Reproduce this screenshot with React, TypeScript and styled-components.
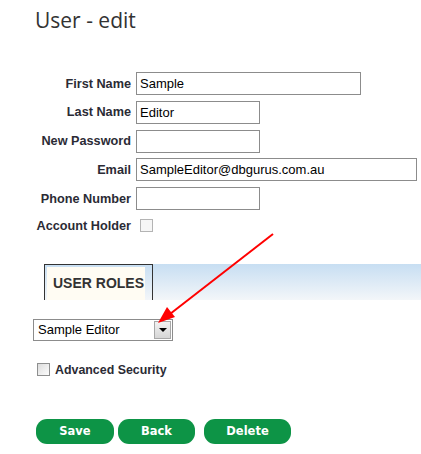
import React from "react";
import styled, { createGlobalStyle } from "styled-components";

const Global = createGlobalStyle`
  html, body { margin: 0; padding: 0; background: #fff; }
  body { font-family: "Liberation Sans", Arial, sans-serif; }
`;

const Page = styled.div`
  position: relative;
  width: 421px;
  height: 454px;
  overflow: hidden;
  padding-top: 6px;
  box-sizing: border-box;
`;

const Title = styled.h1`
  margin: 0 0 38px 35px;
  font-family: "Open Sans", "Noto Sans", sans-serif;
  font-weight: 400;
  font-size: 21px;
  line-height: 28px;
  color: #333;
`;

const FormGrid = styled.div`
  display: grid;
  grid-template-columns: 131px 1fr;
  column-gap: 5px;
  row-gap: 5.75px;
  align-items: center;
`;

const Label = styled.label`
  text-align: right;
  font-weight: 700;
  font-size: 12.7px;
  color: #2b2b35;
  white-space: nowrap;
`;

const TextInput = styled.input<{ $w: number }>`
  width: ${(p) => p.$w}px;
  height: 23px;
  box-sizing: border-box;
  border: 1px solid #8c8c8c;
  padding: 0 3px;
  margin: 0;
  font-family: "Liberation Sans", Arial, sans-serif;
  font-size: 13px;
  color: #000;
  background: #fff;
  outline: none;
`;

const CheckRow = styled.div`
  height: 20px;
  display: flex;
  align-items: center;
  padding-left: 4px;
`;

const Check = styled.span<{ $disabled?: boolean }>`
  display: inline-block;
  width: 13px;
  height: 13px;
  box-sizing: border-box;
  border: 1px solid ${(p) => (p.$disabled ? "#b4b4b4" : "#8e8f8f")};
  background: ${(p) =>
    p.$disabled
      ? "#f6f6f6"
      : "linear-gradient(135deg, #dcdcdc 0%, #f0f0f0 60%, #fcfcfc 100%)"};
`;

const TabBand = styled.div`
  margin: 28px 0 0 44px;
  height: 36px;
  background: linear-gradient(#c7def2, #f3f6f9);
  display: flex;
`;

const Tab = styled.div`
  width: 109px;
  box-sizing: border-box;
  border: 1px solid #333;
  border-bottom: none;
  padding: 2px 7px 0 2px;
  display: flex;
`;

const TabInner = styled.div`
  flex: 1;
  background: #fffcf3;
  display: flex;
  align-items: center;
  padding-left: 6px;
  font-weight: 700;
  font-size: 14px;
  color: #333;
  white-space: nowrap;
`;

const SelectBox = styled.div`
  margin: 19px 0 0 33px;
  width: 140px;
  height: 22px;
  box-sizing: border-box;
  border: 1px solid #8c8c8c;
  display: flex;
  align-items: stretch;
  background: #fff;
`;

const SelectText = styled.span`
  flex: 1;
  display: flex;
  align-items: center;
  padding-left: 4px;
  font-size: 13px;
  color: #000;
`;

const SelectButton = styled.span`
  width: 17px;
  margin: 1px;
  box-sizing: border-box;
  border: 1px solid #a8a8a8;
  background: linear-gradient(#f2f2f2, #d6d6d6);
  display: flex;
  align-items: center;
  justify-content: center;
  &::after {
    content: "";
    border-left: 4px solid transparent;
    border-right: 4px solid transparent;
    border-top: 4px solid #000;
  }
`;

const AdvRow = styled.div`
  margin: 21px 0 0 37px;
  display: flex;
  align-items: center;
  gap: 5px;
  height: 15px;
`;

const AdvLabel = styled.span`
  font-weight: 700;
  font-size: 12.4px;
  color: #2b2b35;
  position: relative;
  top: 1px;
`;

const ButtonRow = styled.div`
  margin: 42px 0 0 36px;
  display: flex;
`;

const GreenButton = styled.button<{ $w: number; $gap: number }>`
  width: ${(p) => p.$w}px;
  height: 25px;
  margin-right: ${(p) => p.$gap}px;
  border: none;
  border-radius: 11px;
  background: #0d9446;
  color: #fff;
  font-family: "DejaVu Sans", Verdana, sans-serif;
  font-weight: 700;
  font-size: 11.5px;
  padding: 0;
  cursor: pointer;
`;

const ArrowOverlay = styled.svg`
  position: absolute;
  left: 0;
  top: 0;
  pointer-events: none;
`;

export default function App() {
  return (
    <>
      <Global />
      <Page>
        <Title>User - edit</Title>
        <FormGrid>
          <Label>First Name</Label>
          <TextInput $w={225} defaultValue="Sample" />
          <Label>Last Name</Label>
          <TextInput $w={124} defaultValue="Editor" />
          <Label>New Password</Label>
          <TextInput $w={124} type="password" />
          <Label>Email</Label>
          <TextInput $w={281} defaultValue="SampleEditor@dbgurus.com.au" />
          <Label>Phone Number</Label>
          <TextInput $w={124} />
          <Label>Account Holder</Label>
          <CheckRow>
            <Check $disabled />
          </CheckRow>
        </FormGrid>
        <TabBand>
          <Tab>
            <TabInner>USER ROLES</TabInner>
          </Tab>
        </TabBand>
        <SelectBox>
          <SelectText>Sample Editor</SelectText>
          <SelectButton />
        </SelectBox>
        <AdvRow>
          <Check />
          <AdvLabel>Advanced Security</AdvLabel>
        </AdvRow>
        <ButtonRow>
          <GreenButton $w={78} $gap={4}>Save</GreenButton>
          <GreenButton $w={77} $gap={9}>Back</GreenButton>
          <GreenButton $w={87} $gap={0}>Delete</GreenButton>
        </ButtonRow>
        <ArrowOverlay width="421" height="454" viewBox="0 0 421 454">
          <line x1="273" y1="234" x2="170" y2="314" stroke="#f00" strokeWidth="2" />
          <polygon points="158,323 175,317 167,307" fill="#f00" />
        </ArrowOverlay>
      </Page>
    </>
  );
}
